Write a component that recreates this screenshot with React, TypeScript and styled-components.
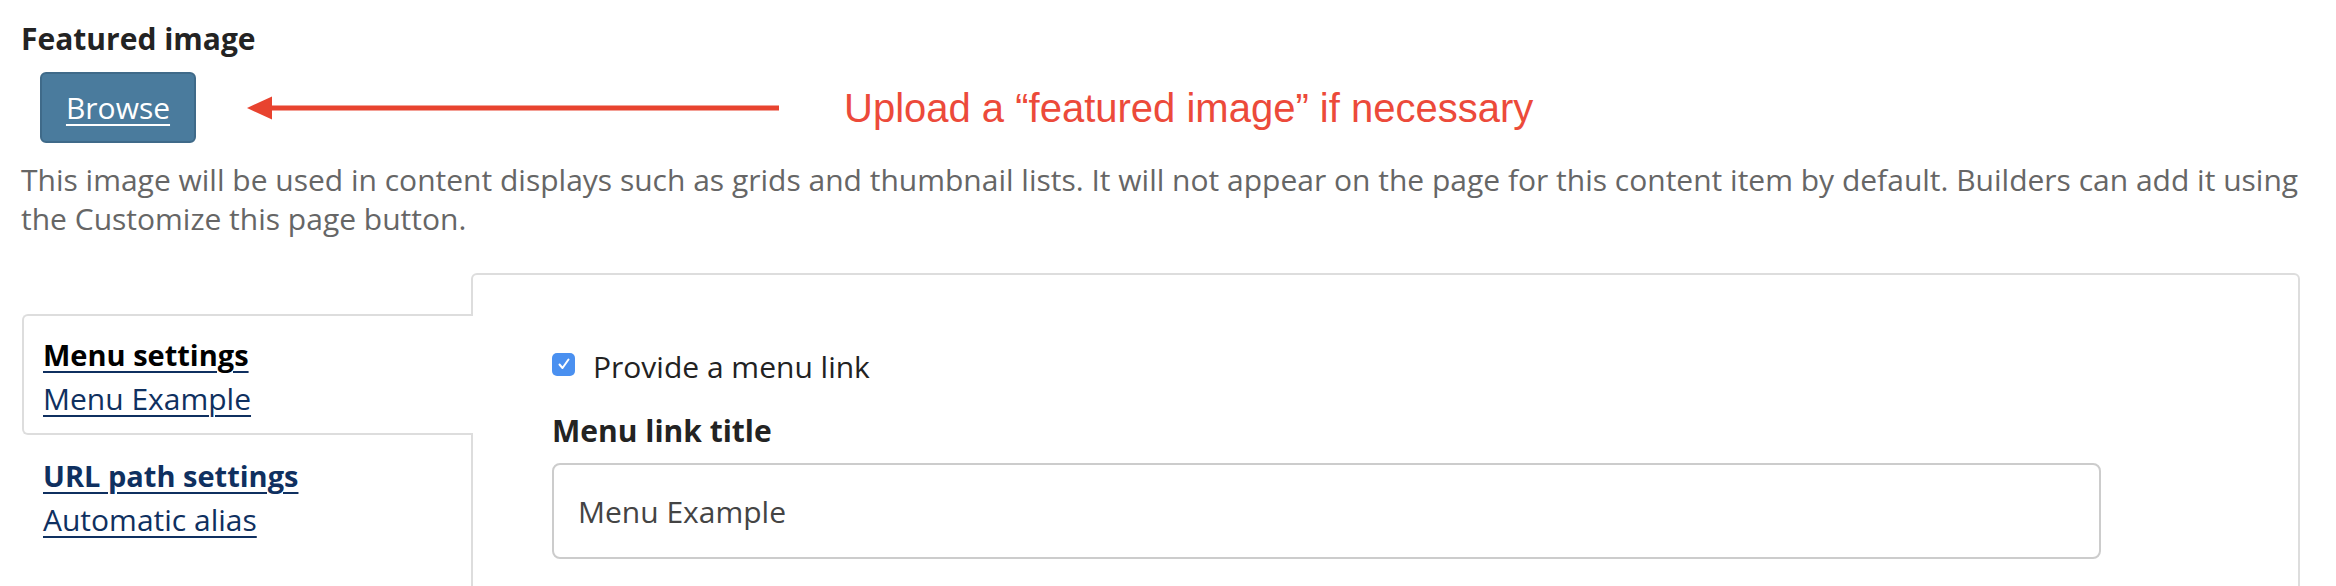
import styled, { createGlobalStyle, css } from 'styled-components'

const GlobalStyle = createGlobalStyle`
  body {
    margin: 0;
    background: #ffffff;
    font-family: "Open Sans", "Liberation Sans", sans-serif;
    color: #222222;
  }
`

const tabs: {
  id: string
  title: string
  summary: string
  active?: boolean
}[] = [
    { id: 'menu', title: 'Menu settings', summary: 'Menu Example', active: true },
    { id: 'path', title: 'URL path settings', summary: 'Automatic alias' }
  ]

const ArrowLeft: React.FC = () => (
  <svg width="532" height="24" viewBox="0 0 532 24">
    <polygon points="0,12 25,0.5 25,23.5" fill="#e8432f" />
    <rect x="22" y="9.5" width="510" height="5" fill="#e8432f" />
  </svg>
)

const App: React.FC = () => (
  <Page>
    <GlobalStyle />
    <FieldLabel>Featured image</FieldLabel>
    <UploadRow>
      <BrowseButton>Browse</BrowseButton>
      <ArrowWrap><ArrowLeft /></ArrowWrap>
      <Annotation>Upload a “featured image” if necessary</Annotation>
    </UploadRow>
    <Description>
      This image will be used in content displays such as grids and thumbnail lists. It will not appear on the page for this content item by default. Builders can add it using the Customize this page button.
    </Description>
    <VerticalTabs>
      <TabMenu>
        {tabs.map(tab => <TabItem key={tab.id} $active={tab.active}>
          <TabTitle $active={tab.active}>{tab.title}</TabTitle>
          <TabSummary>{tab.summary}</TabSummary>
        </TabItem>)}
      </TabMenu>
      <TabPanel>
        <CheckRow>
          <CheckBox>
            <svg width="14" height="14" viewBox="0 0 14 14">
              <path d="M2.5 7.5 L5.5 11 L11.5 2.5" fill="none" stroke="#ffffff" strokeWidth="2" strokeLinecap="round" strokeLinejoin="round" />
            </svg>
          </CheckBox>
          <CheckText>Provide a menu link</CheckText>
        </CheckRow>
        <InputLabel>Menu link title</InputLabel>
        <TextInput type="text" defaultValue="Menu Example" readOnly />
      </TabPanel>
    </VerticalTabs>
  </Page>
)

export default App

const Page = styled.div`
  padding: 19px 36px 0 21px;
  font-size: 30px;
`
const FieldLabel = styled.div`
  font-weight: 700;
  line-height: 40px;
  color: #232323;
`
const UploadRow = styled.div`
  display: flex;
  align-items: center;
  margin-top: 13px;
  padding-left: 19px;
`
const BrowseButton = styled.a`
  display: flex;
  align-items: center;
  justify-content: center;
  box-sizing: border-box;
  width: 156px;
  height: 71px;
  background: #4a7b9d;
  border: 2px solid #3f6a89;
  border-radius: 6px;
  color: #ffffff;
  text-decoration: underline;
  text-decoration-thickness: 2px;
  text-underline-offset: 5px;
  cursor: pointer;
`
const ArrowWrap = styled.div`
  display: flex;
  margin-left: 51px;
`
const Annotation = styled.div`
  margin-left: 65px;
  font-family: "Liberation Sans", Arial, sans-serif;
  font-size: 40px;
  color: #ec4a3a;
  line-height: 44px;
`
const Description = styled.p`
  margin: 17px 0 0;
  line-height: 39px;
  color: #666666;
`
const VerticalTabs = styled.div`
  display: grid;
  grid-template-columns: 450px 1fr;
  align-items: start;
  margin-top: 35px;
`
const TabMenu = styled.div`
  display: flex;
  flex-direction: column;
  margin-top: 41px;
  padding-left: 1px;
`
const TabItem = styled.div<{ $active?: boolean }>`
  position: relative;
  z-index: 1;
  margin-right: -2px;
  padding: 17px 20px 12px 19px;
  border: 2px solid transparent;
  border-right: none;
  border-radius: 6px 0 0 6px;
  line-height: 44px;
  ${props => props.$active && css`
    background: #ffffff;
    border-color: #dddddd;
  `}
`
const linkStyle = css`
  display: block;
  width: fit-content;
  text-decoration: underline;
  text-decoration-color: #0f3060;
  text-decoration-thickness: 2px;
  text-underline-offset: 5px;
  cursor: pointer;
`
const TabTitle = styled.a<{ $active?: boolean }>`
  ${linkStyle}
  font-size: 29px;
  font-weight: 700;
  color: ${props => props.$active ? '#000000' : '#0f3060'};
`
const TabSummary = styled.a`
  ${linkStyle}
  color: #0f3060;
`
const TabPanel = styled.div`
  min-height: 400px;
  padding: 72px 0 0 79px;
  border: 2px solid #dddddd;
  border-radius: 6px 6px 0 0;
`
const CheckRow = styled.label`
  display: flex;
  align-items: center;
  gap: 18px;
  line-height: 40px;
  color: #222222;
`
const CheckBox = styled.span`
  display: flex;
  align-items: center;
  justify-content: center;
  width: 23px;
  height: 23px;
  margin-bottom: 6px;
  border-radius: 5px;
  background: #4a90f0;
`
const CheckText = styled.span``
const InputLabel = styled.div`
  margin-top: 24px;
  font-weight: 700;
  line-height: 40px;
  color: #232323;
`
const TextInput = styled.input`
  display: block;
  box-sizing: border-box;
  width: 1549px;
  height: 96px;
  margin-top: 12px;
  padding: 0 24px;
  border: 2px solid #cccccc;
  border-radius: 8px;
  font-family: "Open Sans", sans-serif;
  font-size: 30px;
  color: #444444;
  outline: none;
`
